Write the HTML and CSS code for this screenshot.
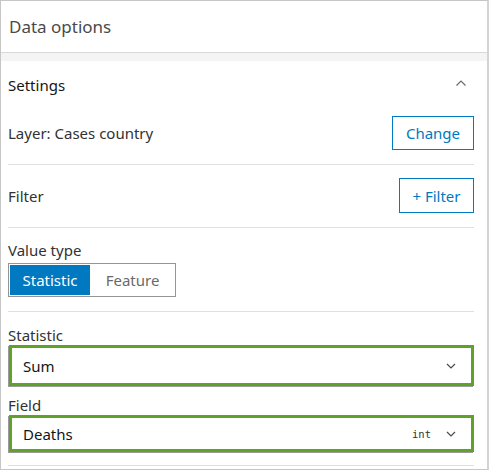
FILE: index.html
```html
<!DOCTYPE html>
<html lang="en">
<head>
<meta charset="utf-8">
<title>Data options</title>
<link rel="stylesheet" href="styles.css">
</head>
<body>
<div class="panel">
  <header class="panel-header">Data options</header>
  <div class="band"></div>
  <section class="block">
    <div class="block-title">
      <span>Settings</span>
      <svg class="chev" width="12" height="8" viewBox="0 0 12 8"><path d="M1.5 6.5 L6 2 L10.5 6.5" fill="none" stroke="#6a6a6a" stroke-width="1.2"/></svg>
    </div>
    <div class="row row-first">
      <span class="row-label">Layer: Cases country</span>
      <button class="btn btn-change">Change</button>
    </div>
    <div class="row">
      <span class="row-label">Filter</span>
      <button class="btn btn-filter">+ Filter</button>
    </div>
    <div class="group group-divided">
      <div class="label">Value type</div>
      <div class="segmented">
        <span class="seg seg-active">Statistic</span>
        <span class="seg">Feature</span>
      </div>
    </div>
    <div class="group group-last">
      <div class="label">Statistic</div>
      <div class="select select-tall">
        <span class="select-value">Sum</span>
        <svg class="chev" width="12" height="8" viewBox="0 0 12 8"><path d="M2 2 L6 6 L10 2" fill="none" stroke="#4a4a4a" stroke-width="1.2"/></svg>
      </div>
      <div class="label label-field">Field</div>
      <div class="select">
        <span class="select-value">Deaths</span>
        <span class="type">int</span>
        <svg class="chev" width="12" height="8" viewBox="0 0 12 8"><path d="M2 2 L6 6 L10 2" fill="none" stroke="#4a4a4a" stroke-width="1.2"/></svg>
      </div>
    </div>
  </section>
</div>
</body>
</html>
```

FILE: styles.css
```css
html, body {
  margin: 0;
  padding: 0;
  background: #ffffff;
}

body {
  font-family: "Noto Sans", "Open Sans", sans-serif;
  color: #323232;
}

.panel {
  width: 486px;
  height: 468px;
  border: 1px solid #c6c6c6;
  border-right: 2px solid #d4d4d4;
  background: #ffffff;
  display: flex;
  flex-direction: column;
}

.panel-header {
  height: 51px;
  border-bottom: 1px solid #d9d9d9;
  padding-left: 8px;
  display: flex;
  align-items: center;
  font-size: 17px;
  color: #4a4a4a;
}

.band {
  height: 8px;
  background: #f4f4f4;
}

.block {
  padding: 0 13px 0 7px;
}

.block-title {
  height: 48px;
  display: flex;
  align-items: center;
  justify-content: space-between;
  font-size: 15px;
  color: #151515;
}

.block-title .chev {
  margin-right: 7px;
  margin-top: -4px;
}

.row {
  display: flex;
  align-items: center;
  justify-content: space-between;
  padding: 13px 0 14px;
  border-bottom: 1px solid #dfdfdf;
}

.row-first {
  padding-top: 7px;
}

.row-label {
  font-size: 15px;
  color: #323232;
}

.btn {
  font-family: inherit;
  font-size: 15px;
  color: #0079c1;
  background: #ffffff;
  border: 1px solid #007ac2;
  padding: 0;
  display: flex;
  align-items: center;
  justify-content: center;
}

.btn-change {
  width: 82px;
  height: 34px;
}

.btn-filter {
  width: 75px;
  height: 35px;
}

.group {
  padding-top: 12px;
}

.group-divided {
  padding-bottom: 14px;
  border-bottom: 1px solid #dfdfdf;
}

.group-last {
  padding-top: 13px;
  padding-bottom: 13px;
  border-bottom: 1px solid #dfdfdf;
}

.label {
  font-size: 15px;
  line-height: 20px;
  color: #323232;
  margin-bottom: 3px;
}

.group-last .label {
  margin-bottom: 0;
}

.label-field {
  margin-top: 9px;
  margin-bottom: 1px;
}

.segmented {
  width: 166px;
  height: 32px;
  border: 1px solid #959595;
  display: flex;
  padding: 0;
  box-sizing: content-box;
}

.seg {
  display: flex;
  align-items: center;
  justify-content: center;
  font-size: 15px;
  color: #6a6a6a;
  flex: 1;
  margin: 1px;
}

.seg-active {
  flex: 0 0 80px;
  background: #0079c1;
  color: #ffffff;
  margin-right: 0;
}

.select {
  height: 31px;
  border: 3px solid #5fa22a;
  box-shadow: -1px 1px 0 #9a9a9a;
  margin-left: 1px;
  display: flex;
  align-items: center;
  padding: 0 14px 0 11px;
  font-size: 15px;
  color: #151515;
}

.select-tall {
  height: 35px;
}

.select-value {
  flex: 1;
}

.type {
  font-family: "DejaVu Sans Mono", monospace;
  font-size: 10.5px;
  color: #323232;
  margin-right: 14px;
}
```
